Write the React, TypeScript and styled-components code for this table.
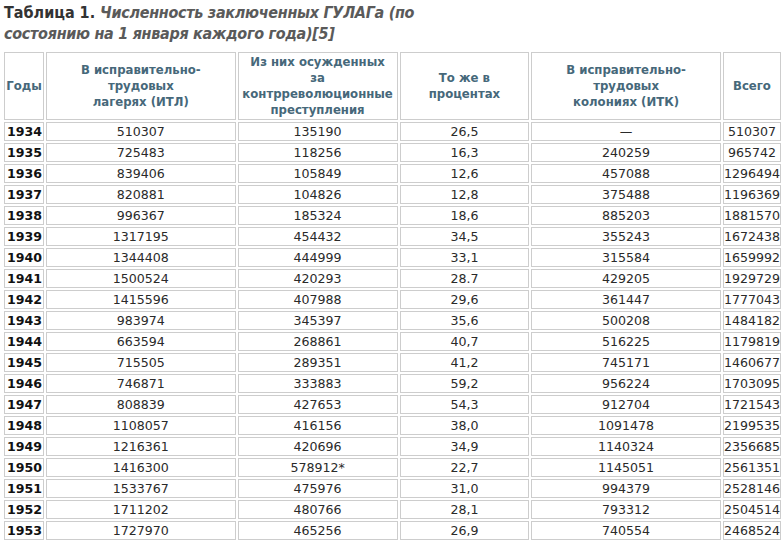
import React from 'react';
import { createGlobalStyle, styled } from 'styled-components';

const GlobalStyle = createGlobalStyle`
  html, body {
    margin: 0;
    padding: 0;
    background: #ffffff;
  }
`;

type Row = [string, string, string, string, string, string];

const rows: Row[] = [
  ['1934', '510307', '135190', '26,5', '—', '510307'],
  ['1935', '725483', '118256', '16,3', '240259', '965742'],
  ['1936', '839406', '105849', '12,6', '457088', '1296494'],
  ['1937', '820881', '104826', '12,8', '375488', '1196369'],
  ['1938', '996367', '185324', '18,6', '885203', '1881570'],
  ['1939', '1317195', '454432', '34,5', '355243', '1672438'],
  ['1940', '1344408', '444999', '33,1', '315584', '1659992'],
  ['1941', '1500524', '420293', '28.7', '429205', '1929729'],
  ['1942', '1415596', '407988', '29,6', '361447', '1777043'],
  ['1943', '983974', '345397', '35,6', '500208', '1484182'],
  ['1944', '663594', '268861', '40,7', '516225', '1179819'],
  ['1945', '715505', '289351', '41,2', '745171', '1460677'],
  ['1946', '746871', '333883', '59,2', '956224', '1703095'],
  ['1947', '808839', '427653', '54,3', '912704', '1721543'],
  ['1948', '1108057', '416156', '38,0', '1091478', '2199535'],
  ['1949', '1216361', '420696', '34,9', '1140324', '2356685'],
  ['1950', '1416300', '578912*', '22,7', '1145051', '2561351'],
  ['1951', '1533767', '475976', '31,0', '994379', '2528146'],
  ['1952', '1711202', '480766', '28,1', '793312', '2504514'],
  ['1953', '1727970', '465256', '26,9', '740554', '2468524'],
];

const columns = [
  { width: 40, title: ['Годы'] },
  { width: 190, title: ['В исправительно-', 'трудовых', 'лагерях (ИТЛ)'] },
  { width: 160, title: ['Из них осужденных', 'за', 'контрреволюционные', 'преступления'] },
  { width: 130, title: ['То же в', 'процентах'] },
  { width: 190, title: ['В исправительно-', 'трудовых', 'колониях (ИТК)'] },
  { width: 57, title: ['Всего'] },
];

function App() {
  return (
    <>
      <GlobalStyle />
      <Page>
        <Caption>
          <Label>Таблица 1.</Label>{' '}
          <Subject>
            Численность заключенных ГУЛАГа (по
            <br />
            состоянию на 1 января каждого года)[5]
          </Subject>
        </Caption>
        <Table>
          <thead>
            <tr>
              {columns.map((col, i) => (
                <HeadCell key={i} $width={col.width}>
                  {col.title.map((line, j) => (
                    <HeadLine key={j}>{line}</HeadLine>
                  ))}
                </HeadCell>
              ))}
            </tr>
          </thead>
          <tbody>
            {rows.map((row) => (
              <tr key={row[0]}>
                <YearCell>{row[0]}</YearCell>
                {row.slice(1).map((value, i) => (
                  <Cell key={i}>{value}</Cell>
                ))}
              </tr>
            ))}
          </tbody>
        </Table>
      </Page>
    </>
  );
}

const Page = styled.div`
  width: 783px;
  overflow: hidden;
`;

const Caption = styled.div`
  padding: 2px 0 0 4px;
  font-family: 'DejaVu Sans Condensed', 'DejaVu Sans', sans-serif;
  font-stretch: condensed;
  font-size: 16px;
  line-height: 21px;
  font-weight: bold;
`;

const Label = styled.span`
  color: #333333;
`;

const Subject = styled.span`
  color: #5a5a5a;
  font-style: italic;
  letter-spacing: -0.3px;
`;

const Table = styled.table`
  margin: 6px 0 0 2px;
  border-collapse: separate;
  border-spacing: 2px;
  table-layout: fixed;
`;

const HeadCell = styled.th<{ $width: number }>`
  box-sizing: border-box;
  width: ${(p) => p.$width}px;
  height: 68px;
  padding: 0;
  border: 1px solid #cdcdcd;
  vertical-align: middle;
  text-align: center;
  font-family: 'DejaVu Sans Condensed', 'DejaVu Sans', sans-serif;
  font-stretch: condensed;
  font-size: 13px;
  line-height: 16px;
  font-weight: bold;
  color: #46687a;
`;

const HeadLine = styled.div`
  white-space: nowrap;
`;

const Cell = styled.td`
  box-sizing: border-box;
  height: 19px;
  padding: 0;
  border: 1px solid #cdcdcd;
  vertical-align: middle;
  text-align: center;
  white-space: nowrap;
  font-family: 'DejaVu Sans', Verdana, sans-serif;
  font-size: 12.6px;
  line-height: 17px;
  color: #2a2a2a;
`;

const YearCell = styled(Cell)`
  padding-left: 2px;
  text-align: left;
  font-weight: bold;
  color: #111111;
`;

export default App;
